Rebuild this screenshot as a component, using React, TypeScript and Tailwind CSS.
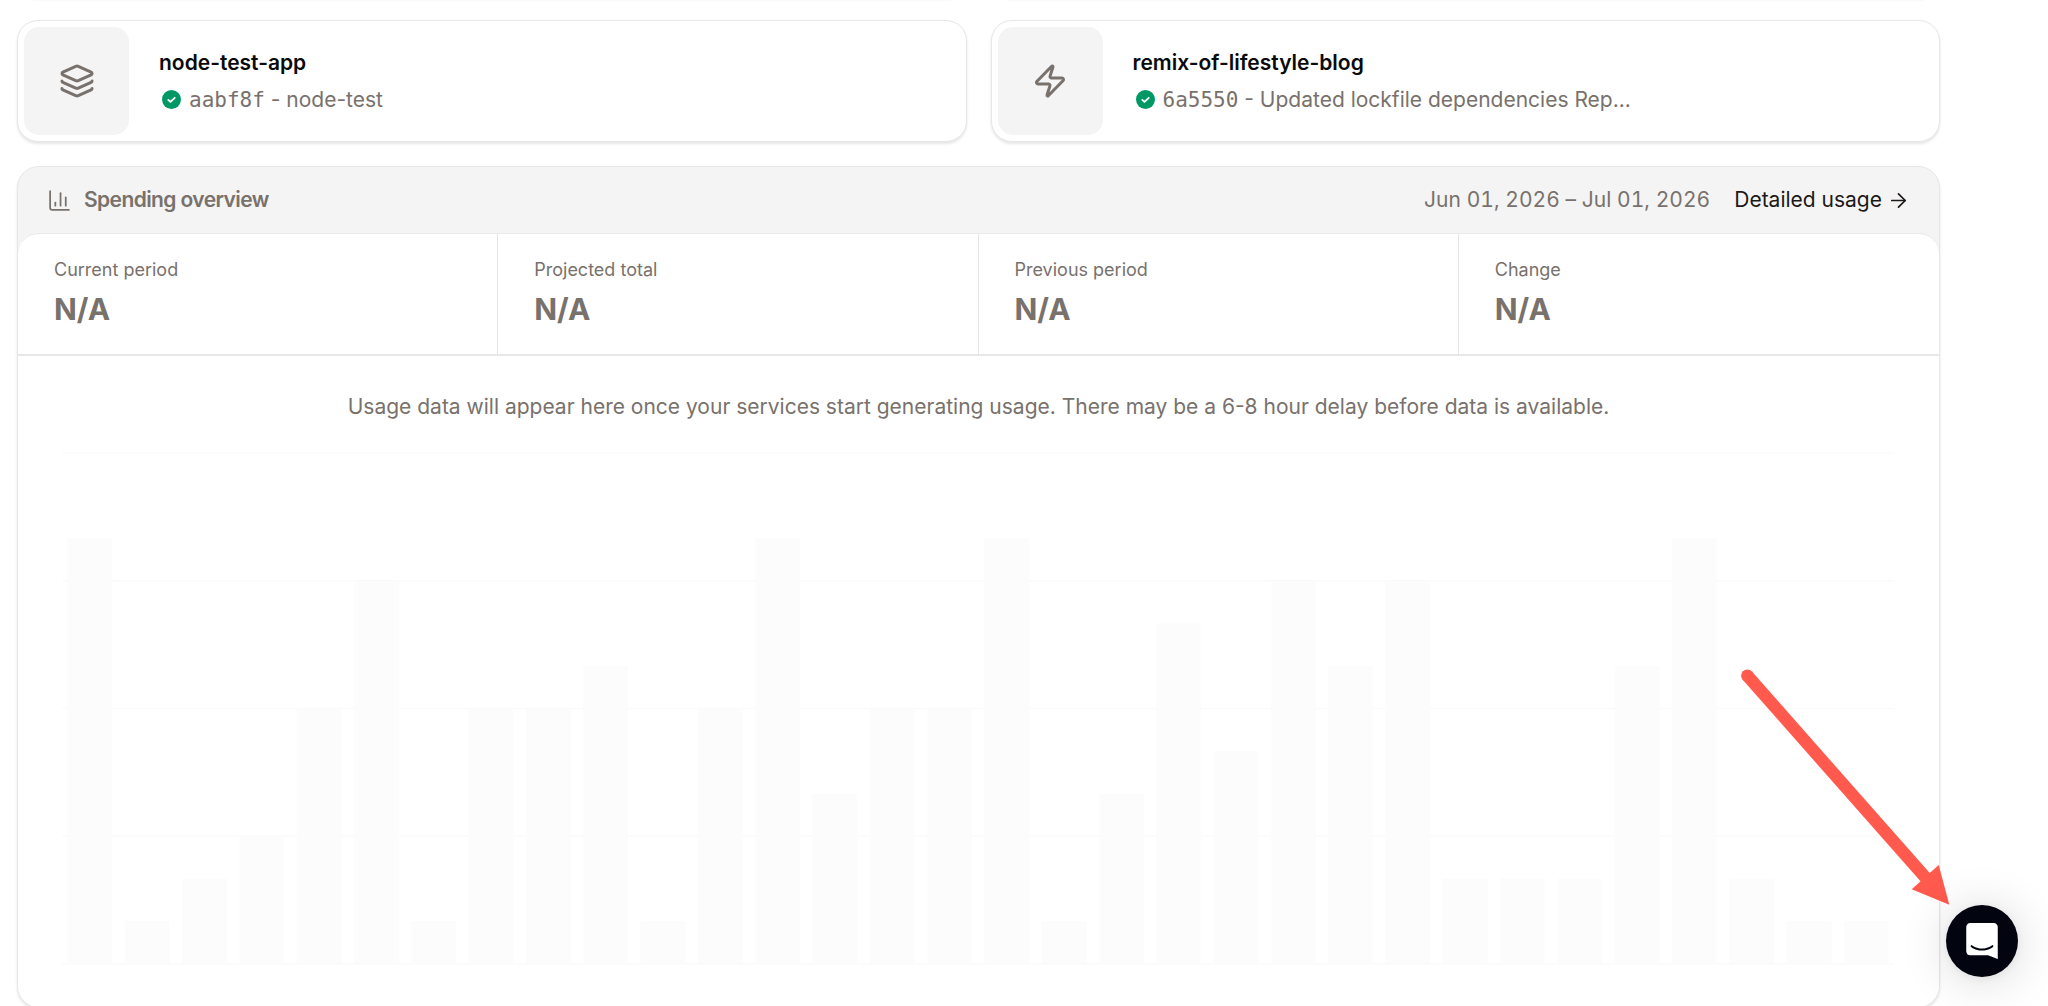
import { FC } from 'react';
import { ArrowRight, ChartColumn, Layers, Zap, LucideIcon } from 'lucide-react';

interface ServiceCardProps {
    name: string;
    commit: string;
    message: string;
    icon: LucideIcon;
}

const SERVICES: ServiceCardProps[] = [
    { name: 'node-test-app', commit: 'aabf8f', message: 'node-test', icon: Layers },
    { name: 'remix-of-lifestyle-blog', commit: '6a5550', message: 'Updated lockfile dependencies Rep...', icon: Zap },
];

const STATS = ['Current period', 'Projected total', 'Previous period', 'Change'];

const BARS = [10, 1, 2, 3, 6, 9, 1, 6, 6, 7, 1, 6, 10, 4, 6, 6, 10, 1, 4, 8, 5, 9, 7, 9, 2, 2, 2, 7, 10, 2, 1, 1];

const GRID_STEP = 127.65;
const BAR_STEP = 57.31;

const StatusCheck = () => (
    <svg viewBox="0 0 20 20" className="mr-2 ml-[3px] h-[19px] w-[19px]">
        <circle cx="10" cy="10" r="10" fill="#009966" />
        <path d="M6.6 10.4l2.3 2.2 4.5-4.4" fill="none" stroke="#fff" strokeWidth="1.9" strokeLinecap="round" strokeLinejoin="round" />
    </svg>
);

const ServiceCard: FC<ServiceCardProps> = ({ name, commit, message, icon: Icon }) => (
    <div className="flex flex-1 items-center rounded-[21px] border border-[#e7e7e7] bg-white p-1.5 shadow-[0_2px_3px_rgba(0,0,0,0.10)]">
        <div className="flex h-[108px] w-[105px] items-center justify-center rounded-[15px] bg-[#f4f4f4] text-[#78716c]">
            <Icon size={36} strokeWidth={2} />
        </div>
        <div className="ml-[30px] flex flex-col gap-1.5 text-[21px] leading-[30px]">
            <p className="font-semibold text-[#0a0a0a]">{name}</p>
            <div className="flex items-center text-[#78716c]">
                <StatusCheck />
                <p className="pt-px whitespace-pre">
                    <span className="font-['DejaVu_Sans_Mono',monospace]">{commit}</span> - {message}
                </p>
            </div>
        </div>
    </div>
);

const PlaceholderChart = () => (
    <svg viewBox="0 0 1834 514" className="mx-auto mt-[29px] block h-[514px] w-[1834px]">
        {[0, 1, 2, 3, 4].map((i) => (
            <rect key={i} x={0.5} y={1.4 + i * GRID_STEP} width={1832} height={1.6} fill="#fafafa" />
        ))}
        {BARS.map((value, i) => {
            const height = (value * GRID_STEP) / 3;
            return <rect key={i} x={5.3 + i * BAR_STEP} y={2.2 + 4 * GRID_STEP - height} width={45} height={height} fill="#fcfcfc" />;
        })}
    </svg>
);

const SpendingOverview = () => (
    <section className="h-[842px] shrink-0 rounded-[22px] border border-[#e7e7e7] bg-[#f4f4f4] shadow-[0_2px_3px_rgba(0,0,0,0.10)]">
        <header className="flex h-[66px] items-center justify-between px-[29px] text-[21px] leading-[30px] text-[#78716c]">
            <div className="flex items-center">
                <ChartColumn size={25} strokeWidth={1.7} />
                <h2 className="ml-3 font-semibold tracking-[-0.6px]">Spending overview</h2>
            </div>
            <div className="flex items-center">
                <span className="tabular-nums tracking-[0.03px]">Jun 01, 2026 – Jul 01, 2026</span>
                <a className="ml-6 flex items-center gap-[5px] text-[#1c1917]">
                    Detailed usage
                    <ArrowRight size={23} strokeWidth={1.8} />
                </a>
            </div>
        </header>
        <div className="h-[774px] rounded-[21px] border-t border-[#e9e9e9] bg-white">
            <div className="grid h-[122px] grid-cols-4 divide-x divide-[#e5e5e5] border-b-2 border-[#e7e7e7]">
                {STATS.map((label) => (
                    <div key={label} className="pt-[22px] pl-9 text-[#78716c]">
                        <p className="text-[18px] leading-[27px]">{label}</p>
                        <p className="mt-[5px] text-[30px] leading-[42px] font-bold">N/A</p>
                    </div>
                ))}
            </div>
            <p className="mt-9 text-center text-[21px] leading-[30px] text-[#78716c]">
                Usage data will appear here once your services start generating usage. There may be a 6-8 hour delay before data is available.
            </p>
            <PlaceholderChart />
        </div>
    </section>
);

const Pointer = () => (
    <svg viewBox="0 0 220 250" className="absolute top-[660px] left-[1735px] h-[250px] w-[220px]" fill="#ff5a4d">
        <path d="M12.3 15.7L195 222.6" stroke="#ff5a4d" strokeWidth="12.4" />
        <circle cx="12.3" cy="15.7" r="6.2" />
        <path d="M214.3 244.7L203.7 205L176.7 229.3Z" />
    </svg>
);

const Launcher = () => (
    <button className="absolute right-[30px] bottom-[29.5px] flex h-[72px] w-[72px] items-center justify-center rounded-full bg-[#020510] shadow-[0_1.5px_9px_rgba(0,0,0,0.06),0_3px_48px_rgba(0,0,0,0.16)]">
        <svg viewBox="0 0 28 32" className="h-[36px] w-[32px]" fill="#fff">
            <path d="M28 32s-4.714-1.855-8.527-3.34H3.437C1.54 28.66 0 27.026 0 25.013V3.644C0 1.633 1.54 0 3.437 0h21.125c1.898 0 3.437 1.632 3.437 3.645v18.404H28V32zm-4.139-11.982a.88.88 0 00-1.292-.105c-.03.026-3.015 2.681-8.57 2.681-5.486 0-8.517-2.636-8.571-2.684a.88.88 0 00-1.29.107 1.01 1.01 0 00-.219.708.992.992 0 00.318.664c.142.128 3.537 3.15 9.762 3.15 6.226 0 9.621-3.022 9.763-3.15a.992.992 0 00.317-.664 1.01 1.01 0 00-.218-.707z" />
        </svg>
    </button>
);

const App = () => {
    return (
        <div className="relative h-screen overflow-hidden bg-white font-['Inter',sans-serif]">
            <main className="ml-[17px] flex w-[1923px] flex-col">
                {/* shadow of the row above, scrolled out of view */}
                <div className="flex h-5 gap-14 px-4">
                    <div className="h-px flex-1 bg-[#fafafa]" />
                    <div className="h-px flex-1 bg-[#fafafa]" />
                </div>
                <div className="mb-6 flex gap-6">
                    {SERVICES.map((service) => (
                        <ServiceCard key={service.name} {...service} />
                    ))}
                </div>
                <SpendingOverview />
            </main>
            <Pointer />
            <Launcher />
        </div>
    );
};

export default App;
